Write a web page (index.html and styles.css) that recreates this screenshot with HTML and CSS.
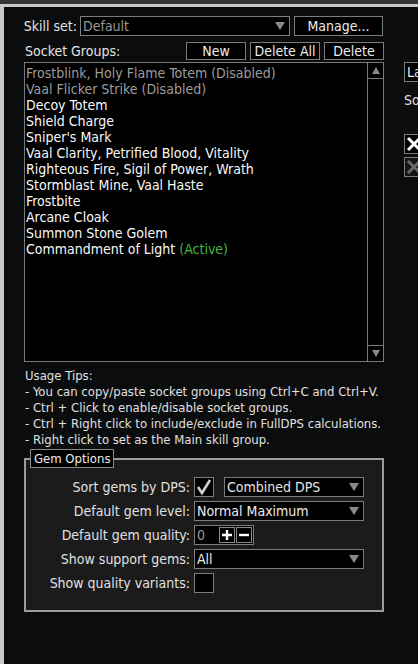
FILE: index.html
```html
<!DOCTYPE html>
<html>
<head>
<meta charset="utf-8">
<link rel="stylesheet" href="styles.css">
</head>
<body>
<div class="topstrip"></div>
<div class="frame">
  <div class="main">
    <div class="row r-skill">
      <span class="lbl skill-lbl">Skill set:</span>
      <div class="dd dd-skill"><span class="dd-text dim">Default</span><span class="tri"></span></div>
      <div class="btn btn-manage">Manage...</div>
    </div>
    <div class="row r-socket">
      <span class="lbl sock-lbl">Socket Groups:</span>
      <div class="btn btn-new">New</div>
      <div class="btn btn-delall">Delete All</div>
      <div class="btn btn-del">Delete</div>
    </div>
    <div class="list">
      <div class="items">
        <div class="item dis">Frostblink, Holy Flame Totem (Disabled)</div>
        <div class="item dis">Vaal Flicker Strike (Disabled)</div>
        <div class="item">Decoy Totem</div>
        <div class="item">Shield Charge</div>
        <div class="item">Sniper's Mark</div>
        <div class="item">Vaal Clarity, Petrified Blood, Vitality</div>
        <div class="item">Righteous Fire, Sigil of Power, Wrath</div>
        <div class="item">Stormblast Mine, Vaal Haste</div>
        <div class="item">Frostbite</div>
        <div class="item">Arcane Cloak</div>
        <div class="item">Summon Stone Golem</div>
        <div class="item">Commandment of Light <span class="active">(Active)</span></div>
      </div>
      <div class="scroll">
        <div class="sbtn sbtn-up"><span class="tri-up"></span></div>
        <div class="track"></div>
        <div class="sbtn sbtn-down"><span class="tri"></span></div>
      </div>
    </div>
    <div class="tips">
      <div>Usage Tips:</div>
      <div>- You can copy/paste socket groups using Ctrl+C and Ctrl+V.</div>
      <div>- Ctrl + Click to enable/disable socket groups.</div>
      <div>- Ctrl + Right click to include/exclude in FullDPS calculations.</div>
      <div>- Right click to set as the Main skill group.</div>
    </div>
    <div class="gem">
      <div class="legend">Gem Options</div>
      <div class="grid">
        <span class="glbl">Sort gems by DPS:</span>
        <div class="ctrl">
          <div class="check"><svg width="18" height="18" viewBox="0 0 18 18"><polyline points="3,9 7,15 15,2" fill="none" stroke="#cfcfcf" stroke-width="2.6"/></svg></div>
          <div class="dd dd-dps"><span class="dd-text">Combined DPS</span><span class="tri"></span></div>
        </div>
        <span class="glbl">Default gem level:</span>
        <div class="ctrl">
          <div class="dd dd-wide"><span class="dd-text">Normal Maximum</span><span class="tri"></span></div>
        </div>
        <span class="glbl">Default gem quality:</span>
        <div class="ctrl">
          <div class="num"><span class="num-text">0</span>
            <span class="pm"><svg width="14" height="14" viewBox="0 0 14 14"><path d="M7 2V12M2 7H12" stroke="#fff" stroke-width="2.4"/></svg></span>
            <span class="pm"><svg width="14" height="14" viewBox="0 0 14 14"><path d="M2 7H12" stroke="#fff" stroke-width="2.4"/></svg></span>
          </div>
        </div>
        <span class="glbl">Show support gems:</span>
        <div class="ctrl">
          <div class="dd dd-wide"><span class="dd-text">All</span><span class="tri"></span></div>
        </div>
        <span class="glbl">Show quality variants:</span>
        <div class="ctrl">
          <div class="check"></div>
        </div>
      </div>
    </div>
  </div>
  <div class="side">
    <div class="side-box">La</div>
    <div class="side-lbl">So</div>
    <div class="xbox"><svg width="18" height="18" viewBox="0 0 18 18"><path d="M3 3L15 15M15 3L3 15" stroke="#fff" stroke-width="3"/></svg></div>
    <div class="xbox xbox-dim"><svg width="18" height="18" viewBox="0 0 18 18"><path d="M3 3L15 15M15 3L3 15" stroke="#6a6a6a" stroke-width="3"/></svg></div>
  </div>
</div>
</body>
</html>
```
FILE: styles.css
```css
* { box-sizing: border-box; }
html, body {
  margin: 0;
  padding: 0;
  background: #0b0c0e;
  height: 100%;
  overflow: hidden;
}
body {
  font-family: "DejaVu Sans Condensed", "DejaVu Sans", sans-serif;
  font-stretch: condensed;
  font-size: 14px;
  line-height: 16px;
  color: #ececec;
}
.topstrip {
  height: 4px;
  background: #363636;
}
.frame {
  display: flex;
  align-items: flex-start;
  border-top: 3px solid #c9c9c9;
  border-left: 4px solid #c9c9c9;
  height: 660px;
  overflow: hidden;
  background: #0b0c0e;
}
.main {
  width: 380px;
  flex: none;
  padding: 9px 0 0 20px;
}
.row {
  display: flex;
  align-items: center;
}
.r-skill { height: 20px; }
.skill-lbl {
  width: 56px;
  flex: none;
  display: flex;
  justify-content: flex-end;
  white-space: nowrap;
  padding-right: 3px;
  color: #e4e4e4;
}
.dd {
  position: relative;
  display: flex;
  align-items: center;
  height: 20px;
  border: 1px solid #7c7c7c;
  background: #000;
  padding-left: 2px;
}
.dd-text { flex: 1; white-space: nowrap; }
.dim { color: #9a9a9a; }
.tri {
  width: 0;
  height: 0;
  border-left: 5px solid transparent;
  border-right: 5px solid transparent;
  border-top: 8px solid #8a8a8a;
  margin-right: 4px;
}
.tri-up {
  width: 0;
  height: 0;
  border-left: 4px solid transparent;
  border-right: 4px solid transparent;
  border-bottom: 7px solid #8a8a8a;
}
.dd-skill { width: 210px; }
.btn {
  display: flex;
  align-items: center;
  justify-content: center;
  border: 1px solid #7c7c7c;
  background: #000;
  color: #ececec;
  white-space: nowrap;
}
.btn-manage { width: 89px; height: 20px; margin-left: 4px; }
.r-socket { height: 18px; margin-top: 6px; }
.sock-lbl { padding-left: 1px; width: 162px; color: #e4e4e4; white-space: nowrap; }
.btn-new { width: 60px; height: 18px; }
.btn-delall { width: 70px; height: 18px; margin-left: 4px; }
.btn-del { width: 60px; height: 18px; margin-left: 4px; }
.list {
  margin-top: 2px;
  width: 360px;
  height: 300px;
  border: 1px solid #7a7a7a;
  background: #000;
  display: flex;
}
.items {
  flex: 1;
  padding: 2px 0 0 1px;
}
.item { white-space: nowrap; height: 16px; color: #f8f8f8; }
.item.dis { color: #9c9c9c; }
.active { color: #3fb83f; }
.scroll {
  width: 16px;
  border-left: 1px solid #7a7a7a;
  display: flex;
  flex-direction: column;
}
.sbtn {
  height: 16px;
  display: flex;
  align-items: center;
  justify-content: center;
}
.sbtn-up { border-bottom: 1px solid #7a7a7a; }
.sbtn-down { border-top: 1px solid #7a7a7a; }
.sbtn-down .tri {
  margin-right: 0;
  border-left-width: 4px;
  border-right-width: 4px;
  border-top-width: 7px;
}
.track { flex: 1; }
.tips {
  margin-top: 6px;
  padding-left: 1px;
  font-size: 13px;
  color: #e0e0e0;
  white-space: nowrap;
}
.gem {
  position: relative;
  margin-top: 10px;
  width: 360px;
  height: 154px;
  border: 2px solid #9c9c9c;
  background: #1b1b1b;
  padding-top: 17px;
}
.legend {
  position: absolute;
  top: -11px;
  left: 4px;
  width: 84px;
  height: 19px;
  border: 1px solid #8a8a8a;
  background: #000;
  color: #ececec;
  font-size: 13px;
  line-height: 17px;
  padding-left: 3px;
  white-space: nowrap;
}
.grid {
  display: grid;
  grid-template-columns: 164px auto;
  grid-auto-rows: 20px;
  column-gap: 4px;
  row-gap: 4px;
}
.glbl {
  text-align: right;
  align-self: center;
  color: #e0e0e0;
  white-space: nowrap;
}
.ctrl { display: flex; align-items: center; }
.check {
  width: 20px;
  height: 20px;
  border: 1px solid #7c7c7c;
  background: #000;
  display: flex;
  align-items: center;
  justify-content: center;
}
.dd-dps { width: 140px; margin-left: 10px; color: #e4e4e4; }
.dd-wide { width: 170px; color: #ececec; }
.num {
  width: 60px;
  height: 20px;
  border: 1px solid #7c7c7c;
  background: #000;
  display: flex;
  align-items: center;
  padding-left: 2px;
}
.num-text { flex: 1; color: #9a9a9a; }
.pm {
  width: 16px;
  height: 16px;
  border: 1px solid #8a8a8a;
  display: flex;
  align-items: center;
  justify-content: center;
  margin-right: 1px;
}
.side {
  margin-left: 20px;
  padding-top: 55px;
  width: 60px;
  flex: none;
}
.side-box {
  height: 20px;
  border: 1px solid #7c7c7c;
  background: #000;
  padding-left: 2px;
  line-height: 18px;
}
.side-lbl {
  margin-top: 10px;
  height: 16px;
  color: #e0e0e0;
}
.xbox {
  margin-top: 26px;
  width: 20px;
  height: 20px;
  border: 1px solid #7c7c7c;
  background: #000;
  display: flex;
  align-items: center;
  justify-content: center;
}
.xbox-dim { margin-top: 3px; background: #151515; }
```
